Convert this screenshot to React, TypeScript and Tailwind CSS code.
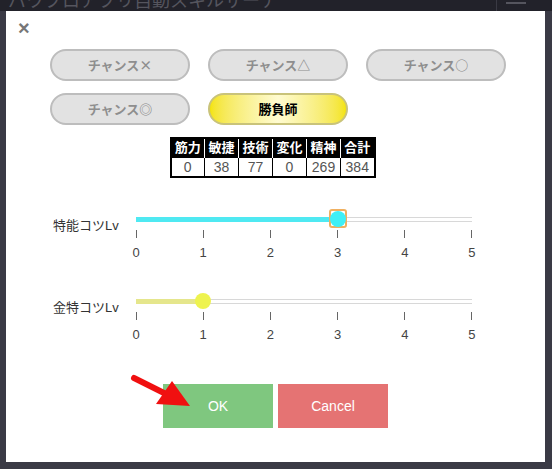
import React from 'react';

const FONT = { fontFamily: '"Liberation Sans", "Noto Sans CJK JP", sans-serif' };
const JP = { fontFamily: '"Noto Sans CJK JP", sans-serif' };

const CHANCES = ['チャンス×', 'チャンス△', 'チャンス○', 'チャンス◎'];
const STATS = [
  { k: '筋力', v: '0' },
  { k: '敏捷', v: '38' },
  { k: '技術', v: '77' },
  { k: '変化', v: '0' },
  { k: '精神', v: '269' },
  { k: '合計', v: '384' },
];

function GrayBtn({ label }: { label: string }) {
  return (
    <button className="w-[140px] h-[32px] rounded-full bg-[#e2e2e2] border-2 border-[#bdbdbd] text-[13px] font-bold text-[#8e8e8e]" style={JP}>
      {label}
    </button>
  );
}

function Slider({ label, value, fill, thumb, focus }: { label: string; value: number; fill: string; thumb: string; focus?: boolean }) {
  const pct = (value / 5) * 100;
  return (
    <div className="flex">
      <div className="w-[83px] text-[13px] text-[#333] leading-none pt-[1px]">{label}</div>
      <div className="w-[336px]">
        <div className="relative h-[10px] -mt-[4px]">
          <div className="absolute left-0 right-0 top-[3px] h-[5px] border-y border-[#d8d8d8] bg-white" />
          <div className="absolute left-0 top-[3px] h-[5px]" style={{ width: `${pct}%`, backgroundColor: fill }} />
          {focus && (
            <div
              className="absolute top-[-5px] w-[18px] h-[19px] rounded-[3px] border-2 border-[#f0b060]"
              style={{ left: `calc(${pct}% - 9px)` }}
            />
          )}
          <div
            className="absolute top-[-3px] w-[16px] h-[16px] rounded-full"
            style={{ left: `calc(${pct}% - 8px)`, backgroundColor: thumb }}
          />
        </div>
        <div className="flex justify-between mt-[6px]">
          {[0, 1, 2, 3, 4, 5].map((n) => (
            <div key={n} className="w-0 flex flex-col items-center">
              <div className="w-px h-[8px] bg-[#666]" />
              <div className="text-[13px] text-[#444] mt-[8px] leading-none">{n}</div>
            </div>
          ))}
        </div>
      </div>
    </div>
  );
}

export default function App() {
  return (
    <div className="relative w-[552px] h-[469px] bg-[#3a3a45] overflow-hidden" style={FONT}>
      <div className="h-[11px] bg-[#22222a] overflow-hidden relative">
        <div className="absolute left-[8px] top-[-12px] text-[18px] text-[#55555e] whitespace-nowrap">パワプロアプリ自動スキルサーチ</div>
        <div className="absolute left-[496px] top-0 w-px h-[11px] bg-[#3a3a44]" />
        <div className="absolute left-[506px] top-[2px] w-[20px] h-[2px] bg-[#55555e]" />
      </div>

      {/* modal */}
      <div className="absolute left-[6px] top-[11px] w-[539px] h-[451px] bg-white">
        <div className="pl-[12px] pt-[7px] text-[20px] leading-none font-bold text-[#777]">×</div>
        <div className="pl-[44px] pt-[11px] flex flex-col gap-[12px]">
          <div className="flex gap-[18px]">
            {CHANCES.slice(0, 3).map((c) => (
              <GrayBtn key={c} label={c} />
            ))}
          </div>
          <div className="flex gap-[18px]">
            <GrayBtn label={CHANCES[3]} />
            <button
              className="w-[140px] h-[32px] rounded-full border-2 border-[#c9c37a] bg-gradient-to-r from-[#f4e400] via-[#fffbd0] to-[#f4e400] text-[13px] font-bold text-black"
              style={JP}
            >
              勝負師
            </button>
          </div>
        </div>

        <div className="flex justify-center pr-[6px] mt-[12px]">
          <table className="border-collapse border-2 border-black text-center">
            <thead>
              <tr className="bg-black text-white">
                {STATS.map((s) => (
                  <th key={s.k} className="w-[34px] h-[19px] p-0 text-[13px] font-bold border-x border-white leading-none">
                    {s.k}
                  </th>
                ))}
              </tr>
            </thead>
            <tbody>
              <tr>
                {STATS.map((s) => (
                  <td key={s.k} className="h-[20px] p-0 text-[14px] text-[#555] border border-black leading-none">
                    {s.v}
                  </td>
                ))}
              </tr>
            </tbody>
          </table>
        </div>

        <div className="pl-[47px] mt-[40px]">
          <Slider label="特能コツLv" value={3} fill="#4fe9f2" thumb="#3ef0f6" focus />
        </div>
        <div className="pl-[47px] mt-[41px]">
          <Slider label="金特コツLv" value={1} fill="#e5e68c" thumb="#eef34e" />
        </div>

        <div className="flex gap-[5px] pl-[157px] mt-[43px]">
          <button className="w-[110px] h-[44px] bg-[#7fc77f] text-white text-[14px]">OK</button>
          <button className="w-[110px] h-[44px] bg-[#e57373] text-white text-[14px]">Cancel</button>
        </div>
      </div>

      <svg className="absolute left-0 top-0" width="552" height="469">
        <line x1="134" y1="378" x2="166" y2="394" stroke="#f01010" strokeWidth="6" strokeLinecap="round" />
        <polygon points="190,406 156,404 172,381" fill="#f01010" />
      </svg>
    </div>
  );
}
